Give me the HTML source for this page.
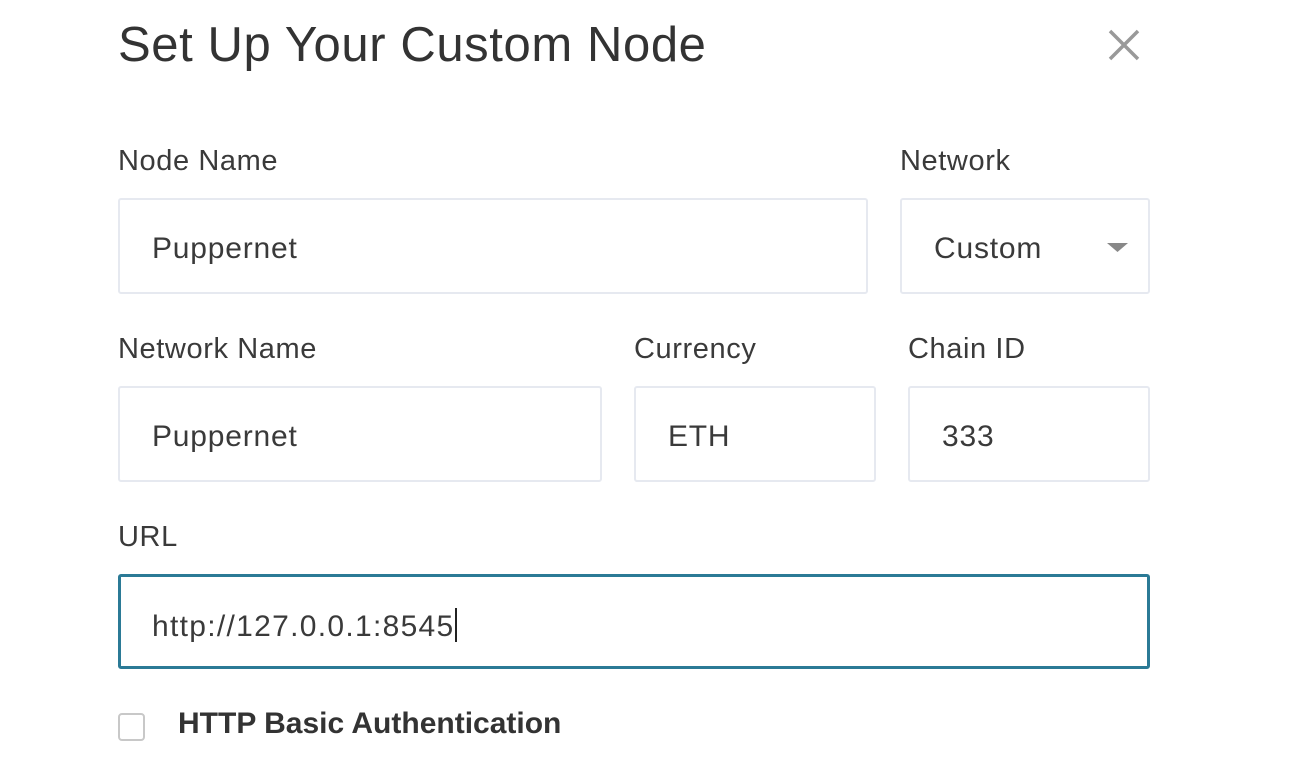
<!DOCTYPE html>
<html><head><style>
body{margin:0;width:1306px;height:782px;background:#fff;font-family:"Liberation Sans",sans-serif;color:#333;position:relative;overflow:hidden}
.a{position:absolute;white-space:nowrap}
.lbl{font-size:29px;letter-spacing:0.6px;color:#3a3a3a}
.box{position:absolute;border:2px solid #e6e9f0;border-radius:3px;box-sizing:border-box}
.val{position:absolute;font-size:30px;letter-spacing:0.8px;color:#3a3a3a;white-space:nowrap}
</style></head><body>
<div class="a" style="left:118px;top:17px;font-size:49px;letter-spacing:0.6px;color:#333">Set Up Your Custom Node</div>
<svg class="a" style="left:1107px;top:28px" width="34" height="34"><path d="M3 3L31 31M31 3L3 31" stroke="#999" stroke-width="3.5"/></svg>

<div class="a lbl" style="left:118px;top:145px">Node Name</div>
<div class="a lbl" style="left:900px;top:145px">Network</div>
<div class="box" style="left:118px;top:198px;width:750px;height:96px"></div>
<div class="val" style="left:152px;top:232px">Puppernet</div>
<div class="box" style="left:900px;top:198px;width:250px;height:96px"></div>
<div class="val" style="left:934px;top:232px">Custom</div>
<svg class="a" style="left:1107px;top:243px" width="22" height="10"><path d="M0 0H21L10.5 9Z" fill="#888"/></svg>

<div class="a lbl" style="left:118px;top:333px">Network Name</div>
<div class="a lbl" style="left:634px;top:333px">Currency</div>
<div class="a lbl" style="left:908px;top:333px">Chain ID</div>
<div class="box" style="left:118px;top:386px;width:484px;height:96px"></div>
<div class="val" style="left:152px;top:420px">Puppernet</div>
<div class="box" style="left:634px;top:386px;width:242px;height:96px"></div>
<div class="val" style="left:668px;top:420px">ETH</div>
<div class="box" style="left:908px;top:386px;width:242px;height:96px"></div>
<div class="val" style="left:942px;top:420px">333</div>

<div class="a lbl" style="left:118px;top:521px">URL</div>
<div class="box" style="left:118px;top:574px;width:1032px;height:95px;border:3px solid #2b7a96"></div>
<div class="val" style="left:152px;top:608px;letter-spacing:1.3px">http://127.0.0.1:8545<span style="display:inline-block;width:2px;height:34px;background:#222;vertical-align:-6px;margin-left:0px"></span></div>

<div class="box" style="left:118px;top:713px;width:27px;height:28px;border:2px solid #c8c8c8;border-radius:4px"></div>
<div class="a" style="left:178px;top:707px;font-size:30px;font-weight:bold;color:#333">HTTP Basic Authentication</div>
</body></html>
